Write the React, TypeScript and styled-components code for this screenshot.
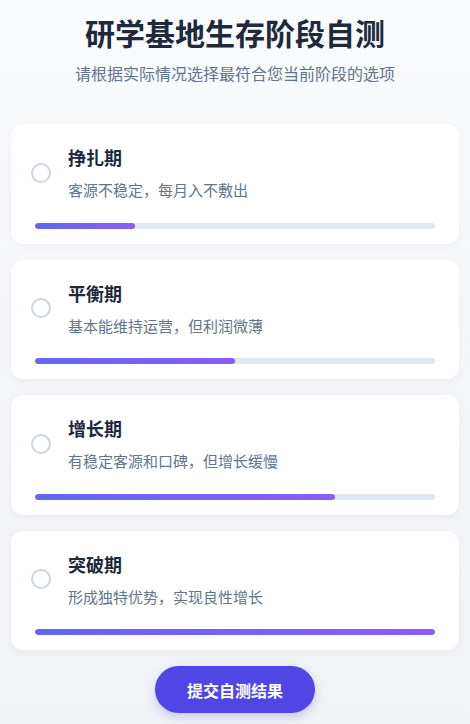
import React, { useState } from 'react';
import styled, { createGlobalStyle } from 'styled-components';

const GlobalStyle = createGlobalStyle`
  html, body {
    margin: 0;
    padding: 0;
  }
  body {
    font-family: "Noto Sans CJK SC", "Noto Sans", sans-serif;
    background: linear-gradient(180deg, #f8fafc 0%, #f1f2f5 100%);
    min-height: 724px;
  }
`;

const stages = [
  { name: '挣扎期', desc: '客源不稳定，每月入不敷出', progress: 25 },
  { name: '平衡期', desc: '基本能维持运营，但利润微薄', progress: 50 },
  { name: '增长期', desc: '有稳定客源和口碑，但增长缓慢', progress: 75 },
  { name: '突破期', desc: '形成独特优势，实现良性增长', progress: 100 }
];

const App = () => {
  const [selected, setSelected] = useState<number | null>(null);

  return (
    <Page>
      <GlobalStyle />
      <Title>研学基地生存阶段自测</Title>
      <Subtitle>请根据实际情况选择最符合您当前阶段的选项</Subtitle>
      <OptionList>
        {stages.map((s, i) => (
          <OptionCard key={s.name} onClick={() => setSelected(i)}>
            <OptionHead>
              <Radio checked={selected === i} />
              <OptionText>
                <OptionName>{s.name}</OptionName>
                <OptionDesc>{s.desc}</OptionDesc>
              </OptionText>
            </OptionHead>
            <Track>
              <Fill style={{ width: `${s.progress}%` }} />
            </Track>
          </OptionCard>
        ))}
      </OptionList>
      <SubmitButton>提交自测结果</SubmitButton>
    </Page>
  );
};

const Page = styled.div`
  padding: 12px 11px 10px;
  display: flex;
  flex-direction: column;
  align-items: center;
`;

const Title = styled.h1`
  margin: 0;
  font-size: 30px;
  line-height: 40px;
  font-weight: 700;
  color: #1e293b;
`;

const Subtitle = styled.p`
  margin: 9px 0 0;
  font-size: 16px;
  line-height: 24px;
  color: #64748b;
`;

const OptionList = styled.div`
  align-self: stretch;
  display: flex;
  flex-direction: column;
  gap: 16px;
  margin-top: 39px;
`;

const OptionCard = styled.div`
  background: #ffffff;
  border-radius: 12px;
  padding: 20px 24px 15px 20px;
  box-shadow: 0 2px 10px rgba(15, 23, 42, 0.04);
  cursor: pointer;
`;

const OptionHead = styled.div`
  display: flex;
  align-items: center;
  gap: 17px;
`;

const Radio = styled.div<{ checked: boolean }>`
  width: 20px;
  height: 20px;
  box-sizing: border-box;
  border-radius: 50%;
  border: 2px solid ${(p) => (p.checked ? '#6366f1' : '#cbd5e1')};
  flex-shrink: 0;
`;

const OptionText = styled.div`
  display: flex;
  flex-direction: column;
`;

const OptionName = styled.div`
  font-size: 18px;
  line-height: 27px;
  font-weight: 700;
  color: #1e293b;
`;

const OptionDesc = styled.div`
  margin-top: 8px;
  font-size: 15px;
  line-height: 22.5px;
  color: #64748b;
`;

const Track = styled.div`
  margin: 21px 0 0 4px;
  height: 6px;
  border-radius: 3px;
  background: #e2e8f0;
  overflow: hidden;
`;

const Fill = styled.div`
  height: 100%;
  border-radius: 3px;
  background: linear-gradient(90deg, #6366f1, #8b5cf6);
`;

const SubmitButton = styled.button`
  margin-top: 16px;
  width: 160px;
  height: 47px;
  border: none;
  border-radius: 24px;
  background: #4f46e5;
  color: #ffffff;
  font-family: "Noto Sans CJK SC", "Noto Sans", sans-serif;
  font-size: 16px;
  font-weight: 700;
  box-shadow: 0 4px 10px rgba(79, 70, 229, 0.25);
  cursor: pointer;
`;

export default App;
